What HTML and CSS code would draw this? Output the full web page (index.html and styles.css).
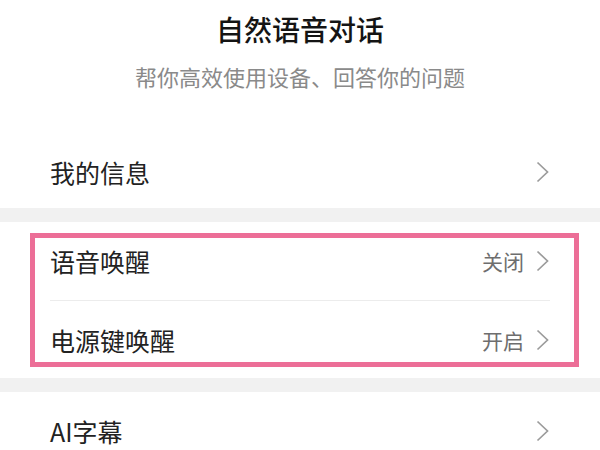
FILE: index.html
```html
<!DOCTYPE html>
<html lang="zh-CN">
<head>
  <meta charset="UTF-8" />
  <meta name="viewport" content="width=device-width, initial-scale=1.0"/>
  <title>自然语音对话</title>
  <link rel="stylesheet" href="styles.css">
</head>
<body>
  <header class="intro">
    <h1>自然语音对话</h1>
    <p>帮你高效使用设备、回答你的问题</p>
  </header>

  <section class="group group-first">
    <a class="row" href="#">
      <div class="row-inner">
        <span class="label">我的信息</span>
        <svg class="chevron" viewBox="0 0 14 22"><path d="M1.5 1.5 L11.5 11 L1.5 20.5"/></svg>
      </div>
    </a>
  </section>

  <section class="group group-wake">
    <a class="row" href="#">
      <div class="row-inner">
        <span class="label">语音唤醒</span>
        <span class="value">关闭</span>
        <svg class="chevron" viewBox="0 0 14 22"><path d="M1.5 1.5 L11.5 11 L1.5 20.5"/></svg>
      </div>
    </a>
    <a class="row" href="#">
      <div class="row-inner">
        <span class="label">电源键唤醒</span>
        <span class="value">开启</span>
        <svg class="chevron" viewBox="0 0 14 22"><path d="M1.5 1.5 L11.5 11 L1.5 20.5"/></svg>
      </div>
    </a>
    <div class="highlight"></div>
  </section>

  <section class="group">
    <a class="row" href="#">
      <div class="row-inner">
        <span class="label">AI字幕</span>
        <svg class="chevron" viewBox="0 0 14 22"><path d="M1.5 1.5 L11.5 11 L1.5 20.5"/></svg>
      </div>
    </a>
  </section>
</body>
</html>
```

FILE: styles.css
```css
* {
  margin: 0;
  padding: 0;
  box-sizing: border-box;
  font-family: "Noto Sans CJK SC", "Noto Sans", sans-serif;
}

body {
  background: #f1f1f1;
  color: #222;
  width: 600px;
  height: 450px;
  overflow: hidden;
}

.intro {
  background: #fff;
  height: 136px;
  padding-top: 11px;
  text-align: center;
}

.intro h1 {
  font-size: 28px;
  line-height: 36px;
  font-weight: 500;
  color: #141414;
}

.intro p {
  margin-top: 14px;
  font-size: 22px;
  line-height: 30px;
  color: #8a8a8a;
}

.group {
  background: #fff;
  margin-bottom: 14px;
  position: relative;
}

.row {
  display: block;
  padding: 0 50px;
  color: inherit;
  text-decoration: none;
}

.row-inner {
  display: flex;
  align-items: center;
  height: 78px;
}

.group-first .row-inner {
  height: 72px;
}

.row + .row .row-inner {
  border-top: 1px solid #ececec;
}

.label {
  flex: 1;
  font-size: 25px;
  color: #222;
}

.value {
  font-size: 21px;
  color: #6e6e6e;
  margin-right: 12px;
}

.chevron {
  width: 14px;
  height: 22px;
  fill: none;
  stroke: #9b9b9b;
  stroke-width: 1.7;
}

/* annotation box around the two wake rows */
.highlight {
  position: absolute;
  top: 11px;
  left: 30px;
  width: 549px;
  height: 134px;
  border: 5px solid #ec6e97;
  pointer-events: none;
}
```
